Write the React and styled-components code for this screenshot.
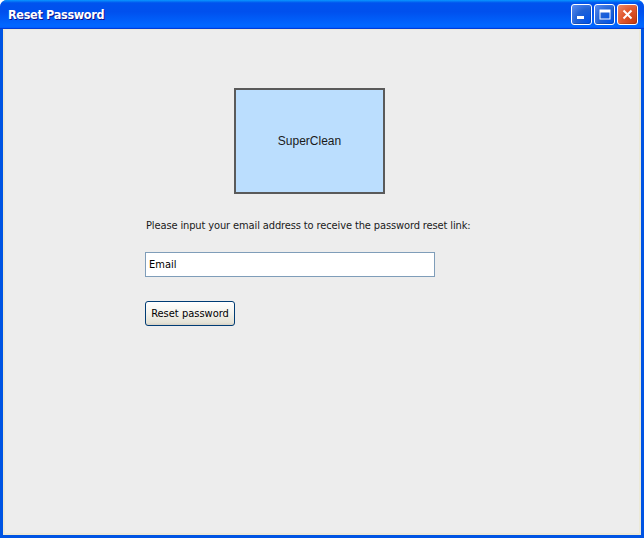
import styled, { createGlobalStyle } from 'styled-components'

const GlobalStyle = createGlobalStyle`
  html, body {
    margin: 0;
    padding: 0;
    background: #ffffff;
  }
`

const Window = styled.div`
  width: 644px;
  height: 538px;
  display: flex;
  flex-direction: column;
  background: #0054e3;
  border-radius: 7px 7px 0 0;
  overflow: hidden;
  box-sizing: border-box;
`

const TitleBar = styled.div`
  height: 29px;
  flex: none;
  display: flex;
  align-items: center;
  padding: 0 6px 0 8px;
  background: linear-gradient(
    180deg,
    #0997ff 0%,
    #0053ee 10%,
    #0050ee 40%,
    #0066ff 86%,
    #0066ff 92%,
    #005bff 95%,
    #003dd7 97%,
    #003dd7 100%
  );
`

const Title = styled.span`
  flex: 1;
  color: #ffffff;
  font-family: 'DejaVu Sans Condensed', 'DejaVu Sans', sans-serif;
  font-weight: bold;
  font-size: 12.5px;
  letter-spacing: -0.3px;
  text-shadow: 1px 1px #0f1089;
`

const Controls = styled.div`
  display: flex;
  gap: 2px;
`

const ControlButton = styled.div`
  width: 21px;
  height: 21px;
  box-sizing: border-box;
  border: 1px solid #ffffff;
  border-radius: 3px;
  display: flex;
  align-items: center;
  justify-content: center;
  background: ${(p) =>
    p.$close
      ? 'radial-gradient(circle at 90% 90%, #c83c10 0%, #e0582e 55%, #f08b68 100%)'
      : 'radial-gradient(circle at 90% 90%, #0054e9 0%, #2263d5 55%, #5d8ef2 100%)'};
  box-shadow: inset -1px -1px rgba(0, 0, 0, 0.15);
`

const Body = styled.div`
  flex: 1;
  margin: 0 3px 3px 3px;
  border: 2px solid #ece9d8;
  border-top-width: 1px;
  background: #ededed;
  padding: 58px 0 0 140px;
  display: flex;
  flex-direction: column;
  align-items: flex-start;
  font-family: 'DejaVu Sans Condensed', 'DejaVu Sans', sans-serif;
  font-size: 11px;
  color: #000000;
`

const Logo = styled.div`
  margin-left: 89px;
  width: 151px;
  height: 106px;
  box-sizing: border-box;
  border: 2px solid #5a5a5a;
  background: #bbdefe;
  display: flex;
  align-items: center;
  justify-content: center;
  font-family: 'Liberation Sans', Arial, sans-serif;
  font-size: 12px;
  color: #1a1a1a;
`

const Prompt = styled.p`
  margin: 25px 0 0 1px;
  line-height: 14px;
  letter-spacing: -0.12px;
  color: #1a1a1a;
`

const EmailInput = styled.input`
  margin-top: 19px;
  width: 290px;
  height: 25px;
  box-sizing: border-box;
  border: 1px solid #7f9db9;
  background: #ffffff;
  padding: 0 3px;
  font-family: inherit;
  font-size: 11px;
  color: #000000;
  outline: none;

  &::placeholder {
    color: #000000;
  }
`

const Button = styled.button`
  margin-top: 24px;
  width: 90px;
  height: 25px;
  box-sizing: border-box;
  border: 1px solid #003c74;
  border-radius: 3px;
  background: linear-gradient(180deg, #ffffff 0%, #f3f2ec 50%, #e4e2d6 90%, #d6d0c5 100%);
  font-family: inherit;
  font-size: 11px;
  color: #000000;
  padding: 0;
`

const MinimizeIcon = () => (
  <svg width="13" height="13" viewBox="0 0 13 13">
    <rect x="2" y="8" width="7" height="3" fill="#fff" />
  </svg>
)

const MaximizeIcon = () => (
  <svg width="13" height="13" viewBox="0 0 13 13">
    <rect x="2" y="2" width="10" height="9" fill="none" stroke="#fff" strokeWidth="1" />
    <rect x="2" y="2" width="10" height="2.5" fill="#fff" />
  </svg>
)

const CloseIcon = () => (
  <svg width="13" height="13" viewBox="0 0 13 13">
    <path d="M2.5 2.5 L10.5 10.5 M10.5 2.5 L2.5 10.5" stroke="#fff" strokeWidth="2" />
  </svg>
)

const App = () => (
  <>
    <GlobalStyle />
    <Window>
      <TitleBar>
        <Title>Reset Password</Title>
        <Controls>
          <ControlButton>
            <MinimizeIcon />
          </ControlButton>
          <ControlButton>
            <MaximizeIcon />
          </ControlButton>
          <ControlButton $close>
            <CloseIcon />
          </ControlButton>
        </Controls>
      </TitleBar>
      <Body>
        <Logo>SuperClean</Logo>
        <Prompt>Please input your email address to receive the password reset link:</Prompt>
        <EmailInput placeholder="Email" />
        <Button>Reset password</Button>
      </Body>
    </Window>
  </>
)

export default App
